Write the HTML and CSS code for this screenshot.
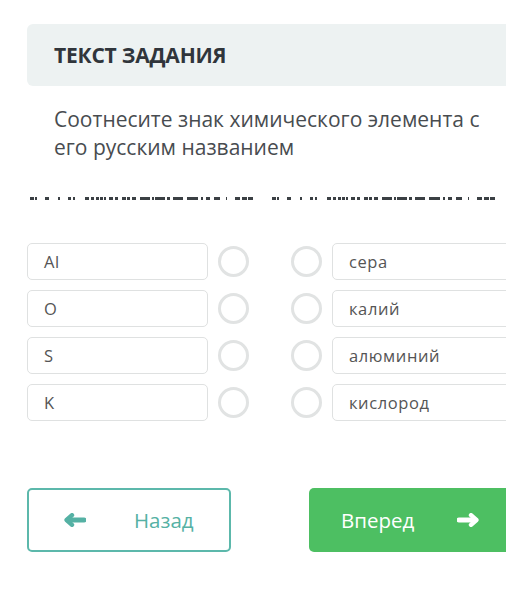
FILE: index.html
```html
<!DOCTYPE html>
<html lang="ru">
<head>
<meta charset="utf-8">
<link rel="stylesheet" href="styles.css">
</head>
<body>
<div class="page">
  <div class="task-head">ТЕКСТ ЗАДАНИЯ</div>
  <p class="task-text">Соотнесите знак химического элемента с его русским названием</p>

  <div class="divider">
    <svg class="dash" width="229" height="3" viewBox="0 0 229 3"><g fill="#3b4044">
      <rect x="0" width="4" height="3"/><rect x="5" width="2" height="3"/><rect x="15" width="4" height="3"/><rect x="28" width="2" height="3"/><rect x="38" width="3" height="3"/><rect x="43" width="2" height="3"/><rect x="55" width="4" height="3"/><rect x="61" width="3" height="3"/><rect x="66" width="3" height="3"/><rect x="70" width="3" height="3"/><rect x="74" width="2" height="3"/><rect x="79" width="4" height="3"/><rect x="85" width="3" height="3"/><rect x="92" width="4" height="3"/><rect x="97" width="3" height="3"/><rect x="102" width="4" height="3"/><rect x="110" width="10" height="3"/><rect x="122" width="2" height="3"/><rect x="125" width="10" height="3"/><rect x="137" width="3" height="3"/><rect x="143" width="10" height="3"/><rect x="157" width="11" height="3"/><rect x="171" width="2" height="3"/><rect x="176" width="4" height="3"/><rect x="184" width="6" height="3"/><rect x="196" width="1" height="3"/><rect x="205" width="5" height="3"/><rect x="212" width="5" height="3"/><rect x="218" width="5" height="3"/>
    </g></svg>
    <svg class="dash" width="229" height="3" viewBox="0 0 229 3"><g fill="#3b4044">
      <rect x="0" width="4" height="3"/><rect x="5" width="2" height="3"/><rect x="15" width="4" height="3"/><rect x="28" width="2" height="3"/><rect x="38" width="3" height="3"/><rect x="43" width="2" height="3"/><rect x="55" width="4" height="3"/><rect x="61" width="3" height="3"/><rect x="66" width="3" height="3"/><rect x="70" width="3" height="3"/><rect x="74" width="2" height="3"/><rect x="79" width="4" height="3"/><rect x="85" width="3" height="3"/><rect x="92" width="4" height="3"/><rect x="97" width="3" height="3"/><rect x="102" width="4" height="3"/><rect x="110" width="10" height="3"/><rect x="122" width="2" height="3"/><rect x="125" width="10" height="3"/><rect x="137" width="3" height="3"/><rect x="143" width="10" height="3"/><rect x="157" width="11" height="3"/><rect x="171" width="2" height="3"/><rect x="176" width="4" height="3"/><rect x="184" width="6" height="3"/><rect x="196" width="1" height="3"/><rect x="205" width="5" height="3"/><rect x="212" width="5" height="3"/><rect x="218" width="5" height="3"/>
    </g></svg>
  </div>

  <div class="pairs">
    <div class="pair">
      <div class="item">Al</div><span class="radio"></span>
      <span class="radio radio-right"></span><div class="item">сера</div>
    </div>
    <div class="pair">
      <div class="item">O</div><span class="radio"></span>
      <span class="radio radio-right"></span><div class="item">калий</div>
    </div>
    <div class="pair">
      <div class="item">S</div><span class="radio"></span>
      <span class="radio radio-right"></span><div class="item">алюминий</div>
    </div>
    <div class="pair">
      <div class="item">K</div><span class="radio"></span>
      <span class="radio radio-right"></span><div class="item">кислород</div>
    </div>
  </div>

  <div class="nav">
    <button class="btn btn-back">
      <svg class="arrow" width="22" height="14" viewBox="0 0 22 14"><path d="M8 2.2 L2.6 7 L8 11.8" fill="none" stroke="currentColor" stroke-width="4.4" stroke-linecap="round" stroke-linejoin="round"/><path d="M4 7 H20" stroke="currentColor" stroke-width="5" stroke-linecap="round"/></svg>
      <span>Назад</span>
    </button>
    <button class="btn btn-next">
      <span>Вперед</span>
      <svg class="arrow" width="22" height="14" viewBox="0 0 22 14"><path d="M14 2.2 L19.4 7 L14 11.8" fill="none" stroke="currentColor" stroke-width="4.4" stroke-linecap="round" stroke-linejoin="round"/><path d="M2 7 H18" stroke="currentColor" stroke-width="5" stroke-linecap="round"/></svg>
    </button>
  </div>
</div>
</body>
</html>
```

FILE: styles.css
```css
html, body {
  margin: 0;
  padding: 0;
  background: #ffffff;
  overflow: hidden;
}

body {
  font-family: "Open Sans", "Noto Sans", sans-serif;
  color: #444;
}

.page {
  width: 486px;
  margin-left: 27px;
  padding-top: 24px;
}

.task-head {
  height: 62px;
  box-sizing: border-box;
  background: #edf2f2;
  border-radius: 6px;
  padding-left: 27px;
  display: flex;
  align-items: center;
  font-weight: 700;
  font-size: 21px;
  color: #30353b;
  letter-spacing: -0.2px;
}

.task-text {
  margin: 19px 0 0;
  padding: 0 27px;
  font-size: 21px;
  line-height: 28px;
  color: #484c50;
}

.divider {
  margin-top: 36px;
  display: flex;
  gap: 13px;
  padding-left: 3px;
  height: 3px;
}

.dash {
  display: block;
  flex: none;
}

.pairs {
  margin-top: 43px;
  display: flex;
  flex-direction: column;
  gap: 10px;
}

.pair {
  display: flex;
  align-items: center;
  height: 37px;
}

.item {
  width: 181px;
  height: 37px;
  flex: none;
  box-sizing: border-box;
  border: 1px solid #dfe1e1;
  border-radius: 5px;
  padding-left: 16px;
  display: flex;
  align-items: center;
  font-size: 16.5px;
  color: #555;
  letter-spacing: 0.6px;
}

.radio {
  width: 31px;
  height: 31px;
  flex: none;
  box-sizing: border-box;
  border: 3px solid #e1e3e3;
  border-radius: 50%;
  margin: 0 10px;
}

.radio-right {
  margin-left: 32px;
}

.nav {
  margin-top: 67px;
  display: flex;
  gap: 78px;
}

.btn {
  width: 204px;
  height: 64px;
  flex: none;
  box-sizing: border-box;
  border-radius: 5px;
  font-family: "Open Sans", "Noto Sans", sans-serif;
  font-size: 20.5px;
  display: flex;
  align-items: center;
  padding: 0;
  cursor: pointer;
}

.btn-back {
  background: #fff;
  border: 2px solid #5cb8ab;
  color: #55b1a4;
  padding-left: 35px;
}

.btn-back span {
  margin-left: 48px;
}

.btn-next {
  background: #4dbf62;
  border: none;
  color: #ffffff;
  padding-left: 32px;
}

.btn-next .arrow {
  margin-left: 43px;
}

.arrow {
  display: block;
}
```
